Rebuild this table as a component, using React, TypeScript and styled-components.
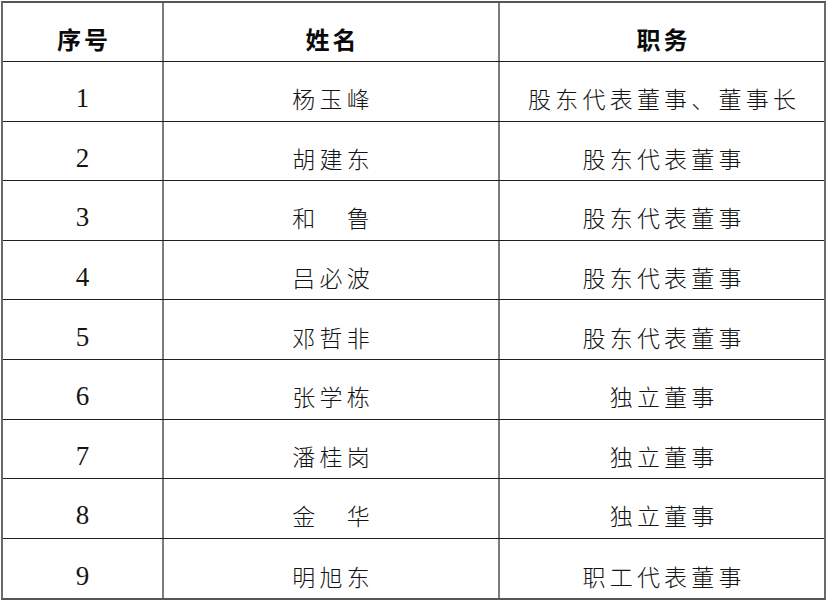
import React from "react";
import styled, { createGlobalStyle } from "styled-components";

const Global = createGlobalStyle`
  html, body { margin: 0; padding: 0; background: #ffffff; }
  body { font-family: "Noto Sans CJK SC", "Noto Sans", sans-serif; color: #111; }
`;

const Table = styled.div`
  margin: 1px 0 0 1px;
  width: 825px;
  box-sizing: border-box;
  border: 2px solid #6a6a6a;
  border-top-color: #555;
  border-bottom-color: #555;
  background: #fff;
`;

const Row = styled.div<{ $head?: boolean; $last?: boolean }>`
  display: grid;
  grid-template-columns: 161px 336px 1fr;
  height: ${(p) => (p.$head ? "59px" : "59.6px")};
  box-sizing: border-box;
  border-bottom: ${(p) => (p.$last ? "none" : "1px solid #1e1e1e")};
`;

const Cell = styled.div<{ $divider?: boolean; $head?: boolean }>`
  display: flex;
  align-items: center;
  justify-content: center;
  box-sizing: border-box;
  padding-top: ${(p) => (p.$head ? "13px" : "15px")};
  border-right: ${(p) => (p.$divider ? "2px solid #7c7c7c" : "none")};
`;

const HeadText = styled.span`
  font-family: "Noto Sans CJK SC", sans-serif;
  font-weight: 700;
  font-size: 24px;
  letter-spacing: 3px;
  padding-left: 3px;
  color: #0a0a0a;
  line-height: 1;
`;

const Num = styled.span`
  font-family: "Liberation Serif", "Times New Roman", serif;
  font-size: 27px;
  color: #151515;
  line-height: 1;
`;

const CnText = styled.span`
  font-family: "Noto Sans CJK SC", sans-serif;
  font-weight: 300;
  font-size: 23px;
  letter-spacing: 4.2px;
  padding-left: 4.2px;
  color: #141414;
  line-height: 1;
  white-space: pre;
`;

const rows: [string, string, string][] = [
  ["1", "杨玉峰", "股东代表董事、董事长"],
  ["2", "胡建东", "股东代表董事"],
  ["3", "和　鲁", "股东代表董事"],
  ["4", "吕必波", "股东代表董事"],
  ["5", "邓哲非", "股东代表董事"],
  ["6", "张学栋", "独立董事"],
  ["7", "潘桂岗", "独立董事"],
  ["8", "金　华", "独立董事"],
  ["9", "明旭东", "职工代表董事"],
];

export default function App() {
  return (
    <>
      <Global />
      <Table>
        <Row $head>
          <Cell $head $divider>
            <HeadText>序号</HeadText>
          </Cell>
          <Cell $head $divider>
            <HeadText>姓名</HeadText>
          </Cell>
          <Cell $head>
            <HeadText>职务</HeadText>
          </Cell>
        </Row>
        {rows.map(([n, name, role], i) => (
          <Row key={n} $last={i === rows.length - 1}>
            <Cell $divider>
              <Num>{n}</Num>
            </Cell>
            <Cell $divider>
              <CnText>{name}</CnText>
            </Cell>
            <Cell>
              <CnText>{role}</CnText>
            </Cell>
          </Row>
        ))}
      </Table>
    </>
  );
}
